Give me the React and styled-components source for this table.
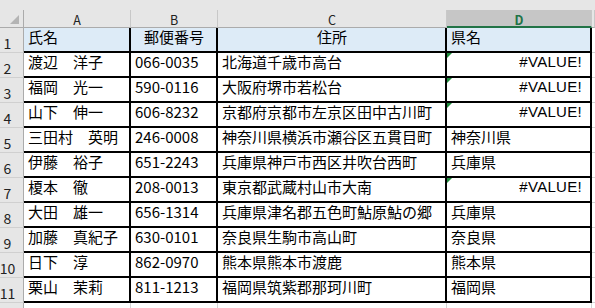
import { Fragment } from 'react'
import styled, { createGlobalStyle, css } from 'styled-components'

const GlobalStyle = createGlobalStyle`
  html, body {
    margin: 0;
    padding: 0;
    background: #fff;
    overflow: hidden;
  }
  body {
    font-family: "Noto Sans CJK JP", "Noto Sans", sans-serif;
  }
`

const columns = ['A', 'B', 'C', 'D']

const rows = [
  ['氏名', '郵便番号', '住所', '県名'],
  ['渡辺　洋子', '066-0035', '北海道千歳市高台', '#VALUE!'],
  ['福岡　光一', '590-0116', '大阪府堺市若松台', '#VALUE!'],
  ['山下　伸一', '606-8232', '京都府京都市左京区田中古川町', '#VALUE!'],
  ['三田村　英明', '246-0008', '神奈川県横浜市瀬谷区五貫目町', '神奈川県'],
  ['伊藤　裕子', '651-2243', '兵庫県神戸市西区井吹台西町', '兵庫県'],
  ['榎本　徹', '208-0013', '東京都武蔵村山市大南', '#VALUE!'],
  ['大田　雄一', '656-1314', '兵庫県津名郡五色町鮎原鮎の郷', '兵庫県'],
  ['加藤　真紀子', '630-0101', '奈良県生駒市高山町', '奈良県'],
  ['日下　淳', '862-0970', '熊本県熊本市渡鹿', '熊本県'],
  ['栗山　茉莉', '811-1213', '福岡県筑紫郡那珂川町', '福岡県'],
]

const App = () => {
  return (
    <>
      <GlobalStyle />
      <Sheet>
        <TopBar />
        <Corner>
          <CornerMark />
        </Corner>
        {columns.map((letter) => (
          <ColHead key={letter} $selected={letter === 'D'}>{letter}</ColHead>
        ))}
        <ColHead />

        {rows.map((row, i) => (
          <Fragment key={i}>
            <RowHead>{i + 1}</RowHead>
            {row.map((value, j) => {
              const isError = value === '#VALUE!'
              const centered = i === 0 && (j === 1 || j === 2)
              return (
                <Cell
                  key={j}
                  $header={i === 0}
                  $align={isError ? 'right' : centered ? 'center' : 'left'}
                  $error={isError}
                >
                  {value}
                </Cell>
              )
            })}
            <EdgeCell />
          </Fragment>
        ))}

        {/* row 12 only peeks in at the bottom edge */}
        <RowHead />
        {columns.map((letter) => (
          <BlankCell key={letter} />
        ))}
        <EdgeCell />
      </Sheet>
    </>
  )
}

export default App

const Sheet = styled.div`
  display: grid;
  grid-template-columns: 24px 107px 87px 229px 145px 3px;
  grid-template-rows: 10px 18px repeat(12, 25px);
  width: 595px;
  height: 308px;
  overflow: hidden;
`

const TopBar = styled.div`
  grid-column: 1 / -1;
  background: #e6e6e6;
`

const Corner = styled.div`
  display: flex;
  justify-content: flex-end;
  align-items: flex-end;
  padding: 0 4px 3px 0;
  background: #e6e6e6;
  border-right: 1px solid #ababab;
  border-bottom: 1px solid #ababab;
`

const CornerMark = styled.div`
  width: 0;
  height: 0;
  border-left: 9px solid transparent;
  border-bottom: 9px solid #b4b4b4;
`

const ColHead = styled.div`
  display: flex;
  justify-content: center;
  align-items: flex-end;
  padding-bottom: 1px;
  background: #e6e6e6;
  border-right: 1px solid #c8c8c8;
  border-bottom: 1px solid #ababab;
  color: #222;
  font-size: 12.5px;
  line-height: 13px;

  ${({ $selected }) =>
    $selected &&
    css`
      background: #c6c6c6;
      color: #217346;
      font-weight: bold;
      padding-bottom: 0;
      border-bottom: 2px solid #217346;
    `}
`

const RowHead = styled.div`
  display: flex;
  justify-content: center;
  align-items: flex-end;
  padding: 0 8px 2px 0;
  background: #e6e6e6;
  border-right: 1px solid #ababab;
  border-bottom: 1px solid #d0d0d0;
  color: #222;
  font-size: 14px;
  line-height: 14px;
`

const Cell = styled.div`
  position: relative;
  display: flex;
  align-items: flex-end;
  justify-content: ${({ $align }) =>
    $align === 'right' ? 'flex-end' : $align === 'center' ? 'center' : 'flex-start'};
  padding: 0 ${({ $align }) => ($align === 'right' ? '8px' : '3px')} 6px 4px;
  background: ${({ $header }) => ($header ? '#ddebf7' : '#fff')};
  border-right: 2px solid #000;
  border-bottom: 2px solid #000;
  color: #000;
  font-size: 15px;
  line-height: 17px;
  white-space: nowrap;

  ${({ $error }) =>
    $error &&
    css`
      font-family: "Liberation Sans", Arial, sans-serif;
      letter-spacing: 0.3px;

      &::before {
        content: '';
        position: absolute;
        top: 0;
        left: 0;
        border-top: 5px solid #1e8b3c;
        border-right: 5px solid transparent;
      }
    `}
`

const BlankCell = styled.div`
  background: #fff;
  border-right: 1px solid #d4d4d4;
`

const EdgeCell = styled.div`
  background: #fff;
  border-bottom: 1px solid #d4d4d4;
`
